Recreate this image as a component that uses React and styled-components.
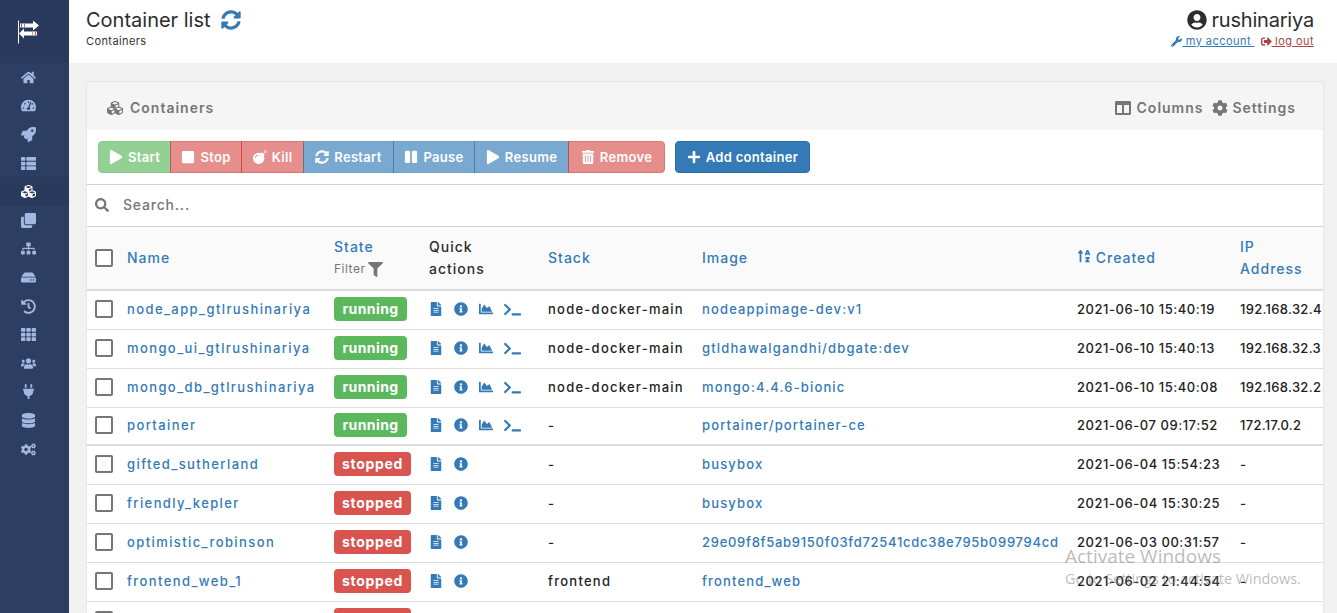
import React from 'react';
import styled, { createGlobalStyle } from 'styled-components';
import {
  FaHome, FaTachometerAlt, FaRocket, FaThList, FaCubes, FaClone, FaSitemap, FaHdd, FaHistory, FaTh,
  FaUsers, FaPlug, FaDatabase, FaCogs, FaSyncAlt, FaUserCircle, FaWrench, FaSignOutAlt, FaColumns,
  FaCog, FaPlay, FaStop, FaBomb, FaPause, FaTrashAlt, FaPlus, FaSearch, FaFilter, FaFileAlt,
  FaInfoCircle, FaChartArea, FaTerminal, FaSortAlphaUp,
} from 'react-icons/fa';

const GlobalStyle = createGlobalStyle`
  html, body { margin: 0; padding: 0; height: 100%; overflow: hidden; }
  body { font-family: Inter, "Liberation Sans", sans-serif; font-size: 14px; color: #333; }
  * { box-sizing: border-box; }
`;

const Page = styled.div`
  display: flex;
  width: 100vw;
  height: 100vh;
  overflow: hidden;
  position: relative;
`;

const Sidebar = styled.nav`
  width: 69px;
  flex: none;
  background: #2d3e63;
`;

const Brand = styled.div`
  height: 63px;
  background: #2a3a5d;
  display: flex;
  align-items: center;
  justify-content: center;
  padding-right: 13px;
`;

const NavItem = styled.div`
  height: 28.6px;
  display: flex;
  align-items: center;
  justify-content: center;
  padding-right: 13px;
  font-size: 15px;
  color: ${p => (p.$active ? '#fff' : '#a3b8e0')};
  background: ${p => (p.$active ? '#2a3a5d' : 'transparent')};
`;

const Main = styled.main`
  flex: 1;
  min-width: 0;
  background: #f1f1f1;
`;

const TopBar = styled.header`
  height: 63px;
  background: #fff;
  display: flex;
  justify-content: space-between;
  padding: 8px 23px 0 17px;
`;

const TitleRow = styled.div`
  display: flex;
  align-items: center;
  gap: 10px;
  font-size: 20px;
  line-height: 24px;
  color: #2d2d2d;
`;

const Refresh = styled(FaSyncAlt)`
  color: #337ab7;
  font-size: 20px;
`;

const Crumb = styled.div`
  font-size: 11px;
  line-height: 14px;
  margin-top: 2px;
  color: #333;
  letter-spacing: 0.4px;
`;

const UserBlock = styled.div`
  display: flex;
  flex-direction: column;
  align-items: flex-end;
`;

const UserName = styled.div`
  display: flex;
  align-items: center;
  gap: 5px;
  font-size: 20px;
  line-height: 24px;
  letter-spacing: -0.2px;
  color: #2d2d2d;
`;

const UserLinks = styled.div`
  display: flex;
  gap: 6px;
  margin-top: 2px;
  font-size: 11px;
  line-height: 14px;
  letter-spacing: 0.45px;
`;

const TextLink = styled.span`
  color: ${p => p.$color};
  text-decoration: underline;
  display: inline-flex;
  align-items: center;
  white-space: pre;
`;

const Content = styled.div`
  padding: 18px 13px 0 17px;
`;

const Panel = styled.section`
  background: #fff;
  border: 1px solid #e6e6e6;
  border-bottom: 0;
  overflow: hidden;
`;

const PanelHead = styled.div`
  height: 48px;
  background: #f5f5f5;
  display: flex;
  align-items: center;
  justify-content: space-between;
  padding: 3px 27px 0 20px;
  color: #767676;
  font-size: 14px;
  font-weight: 600;
  letter-spacing: 1px;
  svg { font-size: 16px; }
`;

const HeadLabel = styled.span`
  display: inline-flex;
  align-items: center;
  gap: ${p => p.$gap || 6}px;
`;

const HeadTools = styled.div`
  display: flex;
  gap: 9px;
`;

const ActionBar = styled.div`
  height: 55px;
  display: flex;
  align-items: flex-start;
  padding: 11px 0 0 11px;
  border-bottom: 1px solid #d2d2d2;
`;

const ButtonGroup = styled.div`
  display: flex;
  margin-right: 10px;
`;

const colors = {
  green: { bg: '#5cb85c', edge: '#4cae4c' },
  red: { bg: '#d9534f', edge: '#c9302c' },
  blue: { bg: '#337ab7', edge: '#2e6da4' },
};

const Btn = styled.div`
  width: ${p => p.$w}px;
  height: 32px;
  padding-bottom: 1px;
  display: flex;
  align-items: center;
  justify-content: center;
  gap: 5px;
  color: #fff;
  font-size: 13px;
  font-weight: 600;
  letter-spacing: 0.3px;
  background: ${p => colors[p.$kind].bg};
  border: 1px solid ${p => colors[p.$kind].edge};
  opacity: ${p => (p.$off ? 0.65 : 1)};
  svg { font-size: 14px; }
  &:first-child { border-radius: 4px 0 0 4px; }
  &:last-child { border-radius: 0 4px 4px 0; }
  &:only-child { border-radius: 4px; }
  & + & { margin-left: -1px; }
`;

const SearchBar = styled.div`
  height: 42px;
  padding: 0 0 2px 8px;
  display: flex;
  align-items: center;
  gap: 14px;
  color: #767676;
  font-size: 14px;
  font-weight: 500;
  letter-spacing: 0.8px;
  border-bottom: 1px solid #d2d2d2;
`;

const Table = styled.table`
  width: 1237px;
  table-layout: fixed;
  border-collapse: separate;
  border-spacing: 0;
  font-size: 13px;
  letter-spacing: 0.55px;
`;

const Th = styled.th`
  height: 64px;
  padding: 0 8px;
  background: #fafafa;
  border-bottom: 2px solid #dcdcdc;
  text-align: left;
  font-weight: 500;
  font-size: 14px;
  line-height: 22px;
  letter-spacing: 1px;
  color: ${p => (p.$plain ? '#2d2d2d' : '#337ab7')};
`;

const Td = styled.td`
  height: ${p => (p.$thick ? 38 : 39)}px;
  padding: 0 8px 2px;
  border-bottom: ${p => (p.$thick ? '2px solid #dcdcdc' : '1px solid #dddddd')};
  white-space: nowrap;
  font-weight: 500;
  color: #222;
  letter-spacing: ${p => p.$spacing || 0.55}px;
`;

const NameWrap = styled.div`
  display: flex;
  align-items: center;
  gap: 14px;
`;

const Check = styled.span`
  width: 18px;
  height: 18px;
  flex: none;
  border: 2px solid #767676;
  border-radius: 2px;
  background: #fff;
`;

const Link = styled.span`
  color: #337ab7;
`;

const FilterLine = styled.div`
  display: flex;
  align-items: center;
  gap: 3px;
  color: #767676;
  font-size: 12px;
  font-weight: 400;
  letter-spacing: 0.5px;
`;

const Badge = styled.span`
  display: inline-block;
  height: 24px;
  line-height: 24px;
  padding: 0 8px;
  min-width: ${p => (p.$state === 'running' ? 73 : 77)}px;
  text-align: center;
  border-radius: 4px;
  color: #fff;
  font-size: 14px;
  font-weight: 700;
  letter-spacing: ${p => (p.$state === 'running' ? 0.4 : 0.7)}px;
  background: ${p => (p.$state === 'running' ? '#5cb85c' : '#d9534f')};
`;

const Quick = styled.div`
  display: flex;
  align-items: center;
  gap: 11px;
  color: #337ab7;
  font-size: 14px;
`;

const Prompt = styled(FaTerminal)`
  font-size: 17px;
`;

const Watermark = styled.div`
  position: absolute;
  left: 1065px;
  top: 544px;
  font-family: "Open Sans", sans-serif;
  color: rgba(120, 120, 120, 0.5);
  pointer-events: none;
`;

const WatermarkTitle = styled.div`
  font-size: 19px;
  line-height: 24px;
`;

const WatermarkSub = styled.div`
  font-size: 14.4px;
  line-height: 20px;
  margin-top: 1px;
`;

const nav = [FaHome, FaTachometerAlt, FaRocket, FaThList, FaCubes, FaClone, FaSitemap, FaHdd, FaHistory, FaTh, FaUsers, FaPlug, FaDatabase, FaCogs];

const buttons = [
  { label: 'Start', Icon: FaPlay, kind: 'green', w: 73 },
  { label: 'Stop', Icon: FaStop, kind: 'red', w: 72 },
  { label: 'Kill', Icon: FaBomb, kind: 'red', w: 63 },
  { label: 'Restart', Icon: FaSyncAlt, kind: 'blue', w: 91 },
  { label: 'Pause', Icon: FaPause, kind: 'blue', w: 82 },
  { label: 'Resume', Icon: FaPlay, kind: 'blue', w: 95 },
  { label: 'Remove', Icon: FaTrashAlt, kind: 'red', w: 97 },
];

const rows = [
  ['node_app_gtlrushinariya', 'running', 'node-docker-main', 'nodeappimage-dev:v1', '2021-06-10 15:40:19', '192.168.32.4'],
  ['mongo_ui_gtlrushinariya', 'running', 'node-docker-main', 'gtldhawalgandhi/dbgate:dev', '2021-06-10 15:40:13', '192.168.32.3'],
  ['mongo_db_gtlrushinariya', 'running', 'node-docker-main', 'mongo:4.4.6-bionic', '2021-06-10 15:40:08', '192.168.32.2'],
  ['portainer', 'running', '-', 'portainer/portainer-ce', '2021-06-07 09:17:52', '172.17.0.2'],
  ['gifted_sutherland', 'stopped', '-', 'busybox', '2021-06-04 15:54:23', '-'],
  ['friendly_kepler', 'stopped', '-', 'busybox', '2021-06-04 15:30:25', '-'],
  ['optimistic_robinson', 'stopped', '-', '29e09f8f5ab9150f03fd72541cdc38e795b099794cd', '2021-06-03 00:31:57', '-'],
  ['frontend_web_1', 'stopped', 'frontend', 'frontend_web', '2021-06-02 21:44:54', '-'],
  ['', 'stopped', '', '', '', ''],
];

const imageSpacing = image => (/^[0-9a-f]{40,}$/.test(image) ? 0.72 : 1.15);

// the arrows have striped tails, hence the small coloured rects
const Logo = () => (
  <svg width="24" height="24" viewBox="0 0 24 24" fill="#fff">
    <rect x="2" y="0.5" width="1" height="23" />
    <path d="M4 3.5h13V0.5l6 5-6 5v-3H4z" />
    <path d="M21 11.5H8v-3l-5 5 5 5v-3h13z" />
    <rect x="5" y="3.5" width="1" height="4" fill="#c9485b" />
    <rect x="8" y="3.5" width="1" height="4" fill="#5b8fd9" />
    <rect x="16" y="11.5" width="1" height="4" fill="#e0a060" />
    <rect x="19" y="11.5" width="1" height="4" fill="#c9485b" />
  </svg>
);

export default function App() {
  return (
    <Page>
      <GlobalStyle />
      <Sidebar>
        <Brand><Logo /></Brand>
        {nav.map((Icon, i) => (
          <NavItem key={i} $active={i === 4}><Icon /></NavItem>
        ))}
      </Sidebar>
      <Main>
        <TopBar>
          <div>
            <TitleRow>Container list <Refresh /></TitleRow>
            <Crumb>Containers</Crumb>
          </div>
          <UserBlock>
            <UserName><FaUserCircle />rushinariya</UserName>
            <UserLinks>
              <TextLink $color="#337ab7"><FaWrench /> my account </TextLink>
              <TextLink $color="#a94442"><FaSignOutAlt /> log out</TextLink>
            </UserLinks>
          </UserBlock>
        </TopBar>
        <Content>
          <Panel>
            <PanelHead>
              <HeadLabel $gap={7}><FaCubes />Containers</HeadLabel>
              <HeadTools>
                <HeadLabel><FaColumns />Columns</HeadLabel>
                <HeadLabel $gap={4}><FaCog />Settings</HeadLabel>
              </HeadTools>
            </PanelHead>
            <ActionBar>
              <ButtonGroup>
                {buttons.map(({ label, Icon, kind, w }) => (
                  <Btn key={label} $kind={kind} $w={w} $off><Icon />{label}</Btn>
                ))}
              </ButtonGroup>
              <ButtonGroup>
                <Btn $kind="blue" $w={135}><FaPlus />Add container</Btn>
              </ButtonGroup>
            </ActionBar>
            <SearchBar><FaSearch />Search...</SearchBar>
            <Table>
              <colgroup>
                <col style={{ width: 239 }} />
                <col style={{ width: 95 }} />
                <col style={{ width: 119 }} />
                <col style={{ width: 154 }} />
                <col style={{ width: 375 }} />
                <col style={{ width: 163 }} />
                <col style={{ width: 92 }} />
              </colgroup>
              <thead>
                <tr>
                  <Th><NameWrap><Check />Name</NameWrap></Th>
                  <Th>State<FilterLine>Filter <FaFilter size={15} /></FilterLine></Th>
                  <Th $plain>Quick<br />actions</Th>
                  <Th>Stack</Th>
                  <Th>Image</Th>
                  <Th><FaSortAlphaUp size={14} /> Created</Th>
                  <Th>IP Address</Th>
                </tr>
              </thead>
              <tbody>
                {rows.map(([name, state, stack, image, created, ip], i) => (
                  <tr key={i}>
                    <Td $thick={i === 3} $spacing={1.4}><NameWrap><Check /><Link>{name}</Link></NameWrap></Td>
                    <Td $thick={i === 3}><Badge $state={state}>{state}</Badge></Td>
                    <Td $thick={i === 3}>
                      <Quick>
                        <FaFileAlt />
                        <FaInfoCircle />
                        {state === 'running' && <FaChartArea />}
                        {state === 'running' && <Prompt />}
                      </Quick>
                    </Td>
                    <Td $thick={i === 3} $spacing={1.25}>{stack}</Td>
                    <Td $thick={i === 3} $spacing={imageSpacing(image)}><Link>{image}</Link></Td>
                    <Td $thick={i === 3}>{created}</Td>
                    <Td $thick={i === 3} $spacing={0.3}>{ip}</Td>
                  </tr>
                ))}
              </tbody>
            </Table>
          </Panel>
        </Content>
      </Main>
      <Watermark>
        <WatermarkTitle>Activate Windows</WatermarkTitle>
        <WatermarkSub>Go to Settings to activate Windows.</WatermarkSub>
      </Watermark>
    </Page>
  );
}
